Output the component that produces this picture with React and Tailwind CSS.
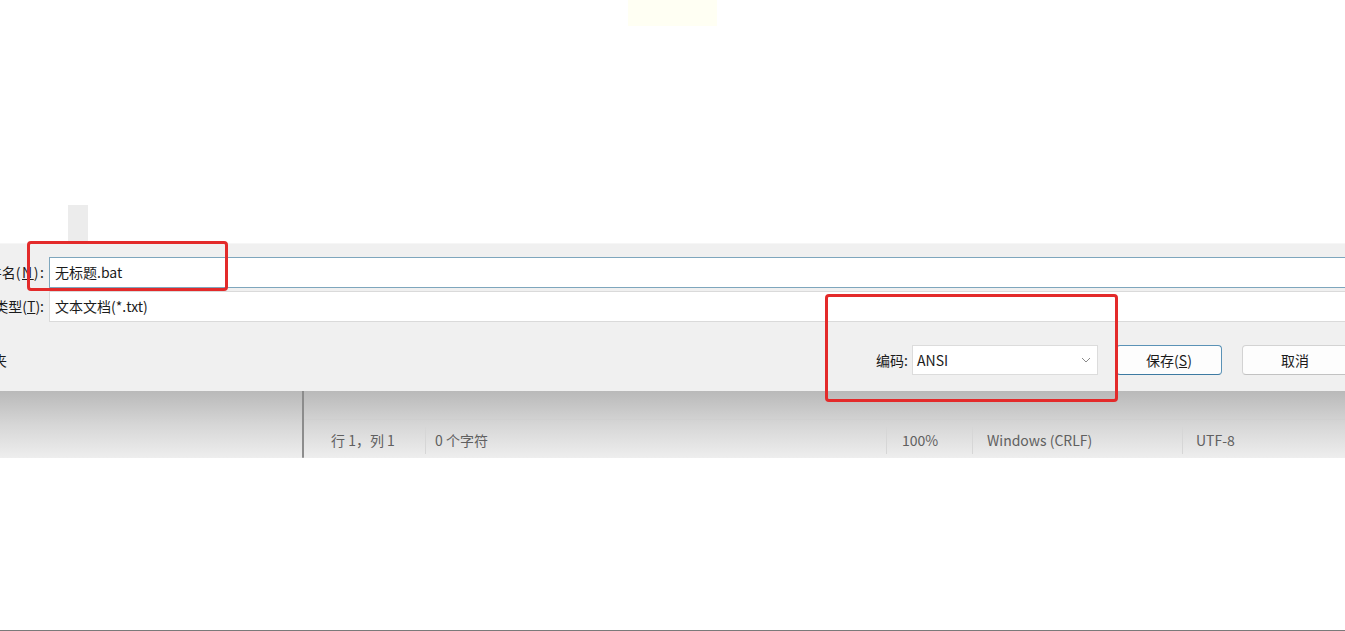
import React from "react";

const font = { fontFamily: '"Noto Sans CJK SC", "Noto Sans", sans-serif' };

function Label({ width, children }) {
  return (
    <div className={`flex justify-end overflow-hidden whitespace-nowrap text-[14px] text-[#1b1b1b] shrink-0`} style={{ width }}>
      {children}
    </div>
  );
}

function Sep() {
  return <div className="w-px self-stretch my-[4px] bg-[#d6d6d6] shrink-0" />;
}

export default function App() {
  return (
    <div className="relative w-[1345px] h-[631px] overflow-hidden bg-white flex flex-col" style={font}>
      {/* top white area */}
      <div className="h-[205px] shrink-0">
        <div className="ml-[628px] w-[89px] h-[26px] bg-[#fffff3]" />
      </div>
      {/* strip */}
      <div className="h-[38px] shrink-0">
        <div className="ml-[68px] w-[20px] h-full bg-[#ececec]" />
      </div>

      {/* dialog */}
      <div className="h-[148px] shrink-0 bg-[#f0f0f0] border-t border-[#f6f6f6] flex flex-col pt-[13px]">
        <div className="flex items-center h-[31px]">
          <Label width="44px">
            <span>文件名<span className="tracking-[1.6px]">(<span className="underline">N</span>)</span>:</span>
          </Label>
          <div className="ml-[5px] w-[1310px] shrink-0 h-[31px] border border-[#7ea6bd] bg-white flex items-center px-[5px] text-[14px] text-[#1b1b1b]">
            无标题.bat
          </div>
        </div>
        <div className="flex items-center h-[31px] mt-[3px]">
          <Label width="44px">
            <span>保存类型(<span className="underline">T</span>):</span>
          </Label>
          <div className="ml-[5px] w-[1310px] shrink-0 h-[31px] border border-[#dadada] bg-white flex items-center px-[5px] text-[14px] text-[#1b1b1b]">
            文本文档(*.txt)
          </div>
        </div>
        <div className="flex items-center h-[30px] mt-[23px] w-[1348px] shrink-0">
          <Label width="7px">
            <span>隐藏文件夹</span>
          </Label>
          <div className="flex-1" />
          <span className="text-[14px] text-[#1b1b1b] mr-[4px]">编码:</span>
          <div className="w-[186px] h-[30px] shrink-0 border border-[#dcdcdc] bg-white flex items-center justify-between pl-[4px] pr-[6px] text-[14px] text-[#1b1b1b]">
            <span>ANSI</span>
            <svg width="10" height="6" viewBox="0 0 10 6" fill="none">
              <path d="M1 1l4 4 4-4" stroke="#8a8a8a" strokeWidth="1" />
            </svg>
          </div>
          <div className="ml-[18px] w-[106px] h-[30px] shrink-0 rounded-[4px] border border-[#5a92b6] border-b-[#3d7aa2] bg-[#fdfdfd] flex items-center justify-center text-[14px] text-[#1b1b1b]">
            <span>保存(<span className="underline">S</span>)</span>
          </div>
          <div className="ml-[20px] w-[106px] h-[30px] shrink-0 rounded-[4px] border border-[#d3d3d3] border-b-[#c2c2c2] bg-[#fdfdfd] flex items-center justify-center text-[14px] text-[#1b1b1b]">
            取消
          </div>
        </div>
      </div>

      {/* notepad behind, shaded */}
      <div className="h-[67px] shrink-0 flex bg-linear-to-b from-[#b9b9b9] via-[#d6d6d6] to-[#eeeeee]">
        <div className="w-[302px] shrink-0" />
        <div className="w-[2px] shrink-0 bg-[#8c8c8c] rounded-b-[2px]" />
        <div className="flex-1 flex flex-col">
          <div className="h-[29px] border-b border-[#cfcfcf] shrink-0" />
          <div className="flex-1 flex items-stretch text-[14px] text-[#606060] pt-[3px]">
            <div className="w-[121px] pl-[27px] flex items-center shrink-0">行 1，列 1</div>
            <Sep />
            <div className="w-[460px] pl-[9px] flex items-center shrink-0">0 个字符</div>
            <Sep />
            <div className="w-[85px] pl-[15px] flex items-center shrink-0">100%</div>
            <Sep />
            <div className="w-[209px] pl-[14px] flex items-center shrink-0">Windows (CRLF)</div>
            <Sep />
            <div className="pl-[13px] flex items-center">UTF-8</div>
          </div>
        </div>
      </div>

      <div className="flex-1" />
      <div className="h-px bg-[#7a7a7a] shrink-0" />

      {/* red annotation boxes */}
      <div className="absolute left-[27px] top-[241px] w-[201px] h-[50px] border-[3px] border-[#e32a2a] rounded-[4px]" />
      <div className="absolute left-[825px] top-[294px] w-[293px] h-[108px] border-[3px] border-[#e32a2a] rounded-[4px]" />
    </div>
  );
}
